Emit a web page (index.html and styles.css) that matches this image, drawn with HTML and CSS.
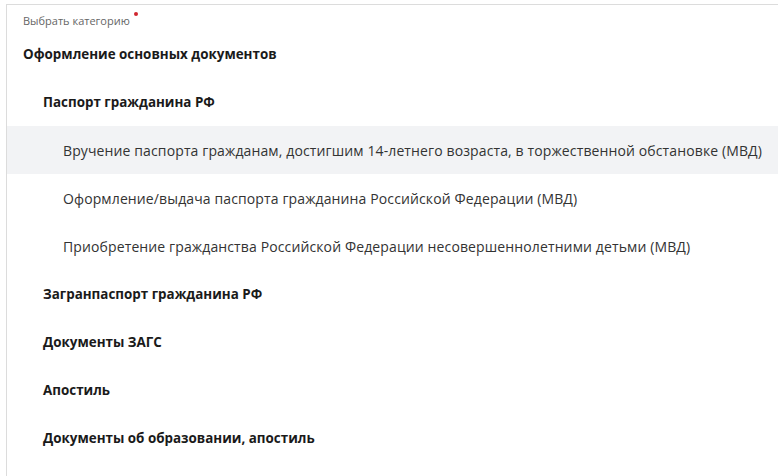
FILE: index.html
```html
<!DOCTYPE html>
<html lang="ru">
<head>
<meta charset="utf-8">
<title>Выбрать категорию</title>
<link rel="stylesheet" href="styles.css">
</head>
<body>
<div class="panel">
  <div class="label">Выбрать категорию<span class="req"></span></div>
  <ul class="tree">
    <li class="row lvl0 bold">Оформление основных документов</li>
    <li class="row lvl1 bold">Паспорт гражданина РФ</li>
    <li class="row lvl2 active">Вручение паспорта гражданам, достигшим 14-летнего возраста, в торжественной обстановке (МВД)</li>
    <li class="row lvl2">Оформление/выдача паспорта гражданина Российской Федерации (МВД)</li>
    <li class="row lvl2">Приобретение гражданства Российской Федерации несовершеннолетними детьми (МВД)</li>
    <li class="row lvl1 bold">Загранпаспорт гражданина РФ</li>
    <li class="row lvl1 bold">Документы ЗАГС</li>
    <li class="row lvl1 bold">Апостиль</li>
    <li class="row lvl1 bold">Документы об образовании, апостиль</li>
  </ul>
</div>
</body>
</html>
```

FILE: styles.css
```css
html, body {
  margin: 0;
  padding: 0;
  background: #fff;
}
body {
  font-family: "Open Sans", "Noto Sans", sans-serif;
  color: #333;
  overflow: hidden;
  height: 100vh;
}
.panel {
  margin: 4px 0 0 6px;
  border-top: 1px solid #dcdcdc;
  border-left: 1px solid #dcdcdc;
  height: calc(100vh - 5px);
  overflow: hidden;
}
.label {
  height: 25px;
  padding-left: 16px;
  font-size: 11px;
  line-height: 32px;
  color: #666;
  display: flex;
  align-items: flex-start;
}
.req {
  width: 4px;
  height: 4px;
  border-radius: 50%;
  background: #d0262f;
  margin-left: 4px;
  margin-top: 7px;
}
.tree {
  list-style: none;
  margin: 0;
  padding: 0;
}
.row {
  height: 48px;
  display: flex;
  align-items: center;
  font-size: 14px;
  letter-spacing: 0.12px;
  white-space: nowrap;
}
.bold {
  font-weight: 700;
  font-size: 13.4px;
  letter-spacing: 0;
  color: #1a1a1a;
}
.lvl0 { padding-left: 16px; }
.lvl1 { padding-left: 36px; }
.lvl2 { padding-left: 56px; }
.active {
  background: #f2f3f5;
}
```
